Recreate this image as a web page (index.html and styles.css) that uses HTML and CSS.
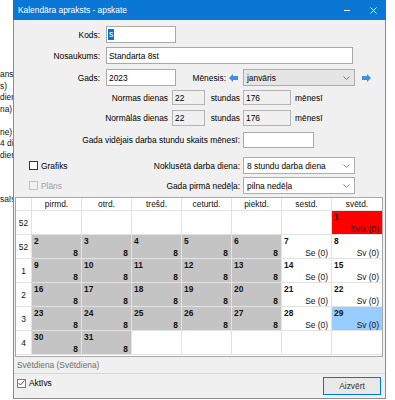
FILE: index.html
```html
<!DOCTYPE html>
<html lang="lv">
<head>
<meta charset="utf-8">
<title>Kalendāra apraksts - apskate</title>
<link rel="stylesheet" href="styles.css">
</head>
<body>
<div class="desk">
  <div class="bgtext">
    <div class="bl">ans</div>
    <div class="bl">s)</div>
    <div class="bl">dienas</div>
    <div class="bl">na)</div>
    <div class="bl"></div>
    <div class="bl">ne)</div>
    <div class="bl">4 dienas</div>
    <div class="bl">dienas</div>
    <div class="bl bl-sai">saīsināts</div>
  </div>

  <div class="win">
    <div class="titlebar">
      <span class="title">Kalendāra apraksts - apskate</span>
      <span class="tb-min"></span>
      <svg class="tb-close" width="7" height="7" viewBox="0 0 7 7"><path d="M0.5 0.5 L6.5 6.5 M6.5 0.5 L0.5 6.5" stroke="#fff" stroke-width="1"/></svg>
    </div>

    <div class="client">
      <div class="row r1">
        <span class="lab lab-a">Kods:</span>
        <div class="fld w-short"><span class="selected">s</span></div>
      </div>
      <div class="row r2">
        <span class="lab lab-a">Nosaukums:</span>
        <div class="fld w-long">Standarta 8st</div>
      </div>
      <div class="row r3">
        <span class="lab lab-a">Gads:</span>
        <div class="fld w-short">2023</div>
        <span class="lab lab-men">Mēnesis:</span>
        <svg class="arr arr-l" width="9" height="8" viewBox="0 0 9 8"><path d="M0 4 L4 0 L4 2 L9 2 L9 6 L4 6 L4 8 Z" fill="#3f8fdf"/></svg>
        <div class="cmb cmb-gray w-cmb"><span>janvāris</span><svg width="7" height="4" viewBox="0 0 7 4"><polyline points="0.5,0.5 3.5,3.5 6.5,0.5" fill="none" stroke="#7a7a7a"/></svg></div>
        <svg class="arr arr-r" width="9" height="8" viewBox="0 0 9 8"><path d="M9 4 L5 0 L5 2 L0 2 L0 6 L5 6 L5 8 Z" fill="#3f8fdf"/></svg>
      </div>
      <div class="row r4">
        <span class="lab lab-b">Normas dienas</span>
        <div class="fld ro w-days">22</div>
        <span class="lab lab-st">stundas</span>
        <div class="fld ro w-hrs">176</div>
        <span class="unit">mēnesī</span>
      </div>
      <div class="row r5">
        <span class="lab lab-b">Normālās dienas</span>
        <div class="fld ro w-days">22</div>
        <span class="lab lab-st">stundas</span>
        <div class="fld ro w-hrs">176</div>
        <span class="unit">mēnesī</span>
      </div>
      <div class="row r6">
        <span class="lab lab-c">Gada vidējais darba stundu skaits mēnesī:</span>
        <div class="fld w-avg"></div>
      </div>
      <div class="row r7">
        <div class="lab-c split">
          <span class="chk"><span class="cb"></span>Grafiks</span>
          <span>Noklusētā darba diena:</span>
        </div>
        <div class="cmb w-cmb"><span>8 stundu darba diena</span><svg width="7" height="4" viewBox="0 0 7 4"><polyline points="0.5,0.5 3.5,3.5 6.5,0.5" fill="none" stroke="#7a7a7a"/></svg></div>
      </div>
      <div class="row r8">
        <div class="lab-c split">
          <span class="chk disabled"><span class="cb"></span>Plāns</span>
          <span>Gada pirmā nedēļa:</span>
        </div>
        <div class="cmb w-cmb"><span>pilna nedēļa</span><svg width="7" height="4" viewBox="0 0 7 4"><polyline points="0.5,0.5 3.5,3.5 6.5,0.5" fill="none" stroke="#7a7a7a"/></svg></div>
      </div>

      <div class="cal">
        <div class="cal-grid">
          <div class="hd"></div>
          <div class="hd">pirmd.</div>
          <div class="hd">otrd.</div>
          <div class="hd">trešd.</div>
          <div class="hd">ceturtd.</div>
          <div class="hd">piektd.</div>
          <div class="hd">sestd.</div>
          <div class="hd">svētd.</div>

          <div class="wk">52</div>
          <div class="c"></div><div class="c"></div><div class="c"></div><div class="c"></div><div class="c"></div><div class="c"></div>
          <div class="c red"><span class="dn">1</span><span class="val">Svtk (0)</span></div>

          <div class="wk">52</div>
          <div class="c g"><span class="dn">2</span><span class="val num">8</span></div>
          <div class="c g"><span class="dn">3</span><span class="val num">8</span></div>
          <div class="c g"><span class="dn">4</span><span class="val num">8</span></div>
          <div class="c g"><span class="dn">5</span><span class="val num">8</span></div>
          <div class="c g"><span class="dn">6</span><span class="val num">8</span></div>
          <div class="c"><span class="dn">7</span><span class="val">Se (0)</span></div>
          <div class="c"><span class="dn">8</span><span class="val">Sv (0)</span></div>

          <div class="wk">1</div>
          <div class="c g"><span class="dn">9</span><span class="val num">8</span></div>
          <div class="c g"><span class="dn">10</span><span class="val num">8</span></div>
          <div class="c g"><span class="dn">11</span><span class="val num">8</span></div>
          <div class="c g"><span class="dn">12</span><span class="val num">8</span></div>
          <div class="c g"><span class="dn">13</span><span class="val num">8</span></div>
          <div class="c"><span class="dn">14</span><span class="val">Se (0)</span></div>
          <div class="c"><span class="dn">15</span><span class="val">Sv (0)</span></div>

          <div class="wk">2</div>
          <div class="c g"><span class="dn">16</span><span class="val num">8</span></div>
          <div class="c g"><span class="dn">17</span><span class="val num">8</span></div>
          <div class="c g"><span class="dn">18</span><span class="val num">8</span></div>
          <div class="c g"><span class="dn">19</span><span class="val num">8</span></div>
          <div class="c g"><span class="dn">20</span><span class="val num">8</span></div>
          <div class="c"><span class="dn">21</span><span class="val">Se (0)</span></div>
          <div class="c"><span class="dn">22</span><span class="val">Sv (0)</span></div>

          <div class="wk">3</div>
          <div class="c g"><span class="dn">23</span><span class="val num">8</span></div>
          <div class="c g"><span class="dn">24</span><span class="val num">8</span></div>
          <div class="c g"><span class="dn">25</span><span class="val num">8</span></div>
          <div class="c g"><span class="dn">26</span><span class="val num">8</span></div>
          <div class="c g"><span class="dn">27</span><span class="val num">8</span></div>
          <div class="c"><span class="dn">28</span><span class="val">Se (0)</span></div>
          <div class="c blue"><span class="dn">29</span><span class="val">Sv (0)</span></div>

          <div class="wk">4</div>
          <div class="c g"><span class="dn">30</span><span class="val num">8</span></div>
          <div class="c g"><span class="dn">31</span><span class="val num">8</span></div>
          <div class="c"></div><div class="c"></div><div class="c"></div><div class="c"></div><div class="c"></div>
        </div>
      </div>

      <div class="status">Svētdiena (Svētdiena)</div>

      <div class="foot">
        <span class="chk chk-act"><span class="cb checked"><svg width="7" height="6" viewBox="0 0 7 6"><polyline points="0.5,3 2.5,5 6.5,0.5" fill="none" stroke="#555" stroke-width="1"/></svg></span>Aktīvs</span>
        <div class="btn">Aizvērt</div>
      </div>
    </div>
  </div>
</div>
</body>
</html>
```

FILE: styles.css
```css
* { box-sizing: border-box; }
html, body { margin: 0; padding: 0; }
body {
  width: 395px;
  height: 400px;
  background: #ffffff;
  font-family: "Liberation Sans", Arial, sans-serif;
  font-size: 8.4px;
  color: #000;
  overflow: hidden;
}
.desk { position: relative; width: 395px; height: 400px; }

/* background application text, mostly hidden by the dialog */
.bgtext { padding-top: 69px; line-height: 11.5px; color: #111; white-space: nowrap; }
.bl { height: 11.5px; }
.bl-sai { margin-top: 33px; }

/* dialog window */
.win {
  position: absolute;
  left: 13px;
  top: 0;
  width: 373px;
  height: 399px;
  background: #f0f0f0;
  border: 1px solid #8c8c8c;
  border-top: none;
  display: flex;
  flex-direction: column;
}
.titlebar {
  height: 20px;
  margin: 0 -1px;
  background: #0b77d4;
  color: #fff;
  display: flex;
  align-items: center;
  padding: 0 9px 0 5px;
  font-size: 8.4px;
}
.title { flex: 1; }
.tb-min { width: 6px; height: 1px; background: #fff; margin-right: 20px; }
.tb-close { display: block; }

.client { flex: 1; display: flex; flex-direction: column; }

.row { display: flex; align-items: center; white-space: nowrap; }
.r1 { margin-top: 6px; height: 17px; }
.r2 { margin-top: 4px; height: 17px; }
.r3 { margin-top: 5px; height: 17px; }
.r4 { margin-top: 4px; height: 15px; }
.r5 { margin-top: 5px; height: 16px; }
.r6 { margin-top: 6px; height: 16px; }
.r7 { margin-top: 9px; height: 17px; }
.r8 { margin-top: 3px; height: 17px; }

.lab { text-align: right; }
.lab-a { width: 86px; margin-right: 6px; }
.lab-men { width: 50px; }
.lab-b { width: 154px; margin-right: 4px; }
.lab-st { width: 35px; margin-right: 3px; }
.lab-c { width: 226px; margin-right: 3px; text-align: right; }
.split { display: flex; justify-content: space-between; align-items: center; padding-left: 15px; }
.unit { margin-left: 4px; }

.fld {
  height: 100%;
  border: 1px solid #a9a9a9;
  background: #fff;
  padding: 0 2px;
  display: flex;
  align-items: center;
  color: #000;
}
.fld.ro { background: #f0f0f0; border-color: #b4b4b4; }
.w-short { width: 70px; }
.w-long { width: 247px; }
.w-days { width: 33px; }
.w-hrs { width: 48px; }
.w-avg { width: 71px; }
.selected { background: #0078d7; color: #fff; padding: 0 1px; line-height: 11px; margin-left: -1px; }

.cmb {
  height: 100%;
  border: 1px solid #adadad;
  background: #fff;
  display: flex;
  align-items: center;
  justify-content: space-between;
  padding: 0 4px 0 3px;
}
.cmb-gray { background: #e5e5e5; }
.w-cmb { width: 112px; }
.arr { display: block; }
.arr-l { margin: 0 5px 0 3px; }
.arr-r { margin-left: 7px; }

.chk { display: flex; align-items: center; }
.cb {
  width: 9px;
  height: 9px;
  border: 1px solid #333;
  background: #fff;
  margin-right: 3px;
  display: flex;
  align-items: center;
  justify-content: center;
}
.chk.disabled { color: #a0a0a0; }
.chk.disabled .cb { border-color: #c4c4c4; background: #f0f0f0; }
.cb.checked { border-color: #7a7a7a; }
.cb svg { display: block; }

/* calendar grid */
.cal {
  margin: 3px 0 0 1px;
  width: 368px;
  border: 1px solid #a8a8a8;
  background: #fff;
  padding-bottom: 1px;
}
.cal-grid {
  display: grid;
  grid-template-columns: 15px repeat(6, 49px) 50px;
  grid-template-rows: 12px repeat(6, 23px);
  gap: 1px;
  background: #e2e2e2;
  border-bottom: 1px solid #e2e2e2;
}
.hd {
  background: #fff;
  text-align: center;
  line-height: 12px;
  color: #111;
}
.wk {
  background: #fff;
  display: flex;
  align-items: center;
  justify-content: center;
  color: #111;
}
.c {
  background: #fff;
  display: flex;
  flex-direction: column;
  justify-content: space-between;
  padding: 1px 3px 0 2px;
  line-height: 10px;
  color: #111;
}
.c.g { background: #c4c4c4; }
.c.red { background: #ff0000; }
.c.blue { background: #99ccff; }
.dn { font-weight: bold; }
.val { align-self: flex-end; }
.val.num { font-weight: bold; }

.status {
  margin-top: 1px;
  height: 15px;
  line-height: 15px;
  padding-left: 3px;
  color: #6e6e6e;
}
.foot {
  flex: 1;
  border-top: 1px solid #d6d6d6;
  display: flex;
  justify-content: space-between;
  align-items: flex-start;
  padding: 3px 4px 0 3px;
}
.chk-act { margin-top: 1px; }
.btn {
  width: 58px;
  height: 18px;
  border: 1px solid #0078d7;
  background: #e8e8e8;
  display: flex;
  align-items: center;
  justify-content: center;
  color: #333;
}
```
